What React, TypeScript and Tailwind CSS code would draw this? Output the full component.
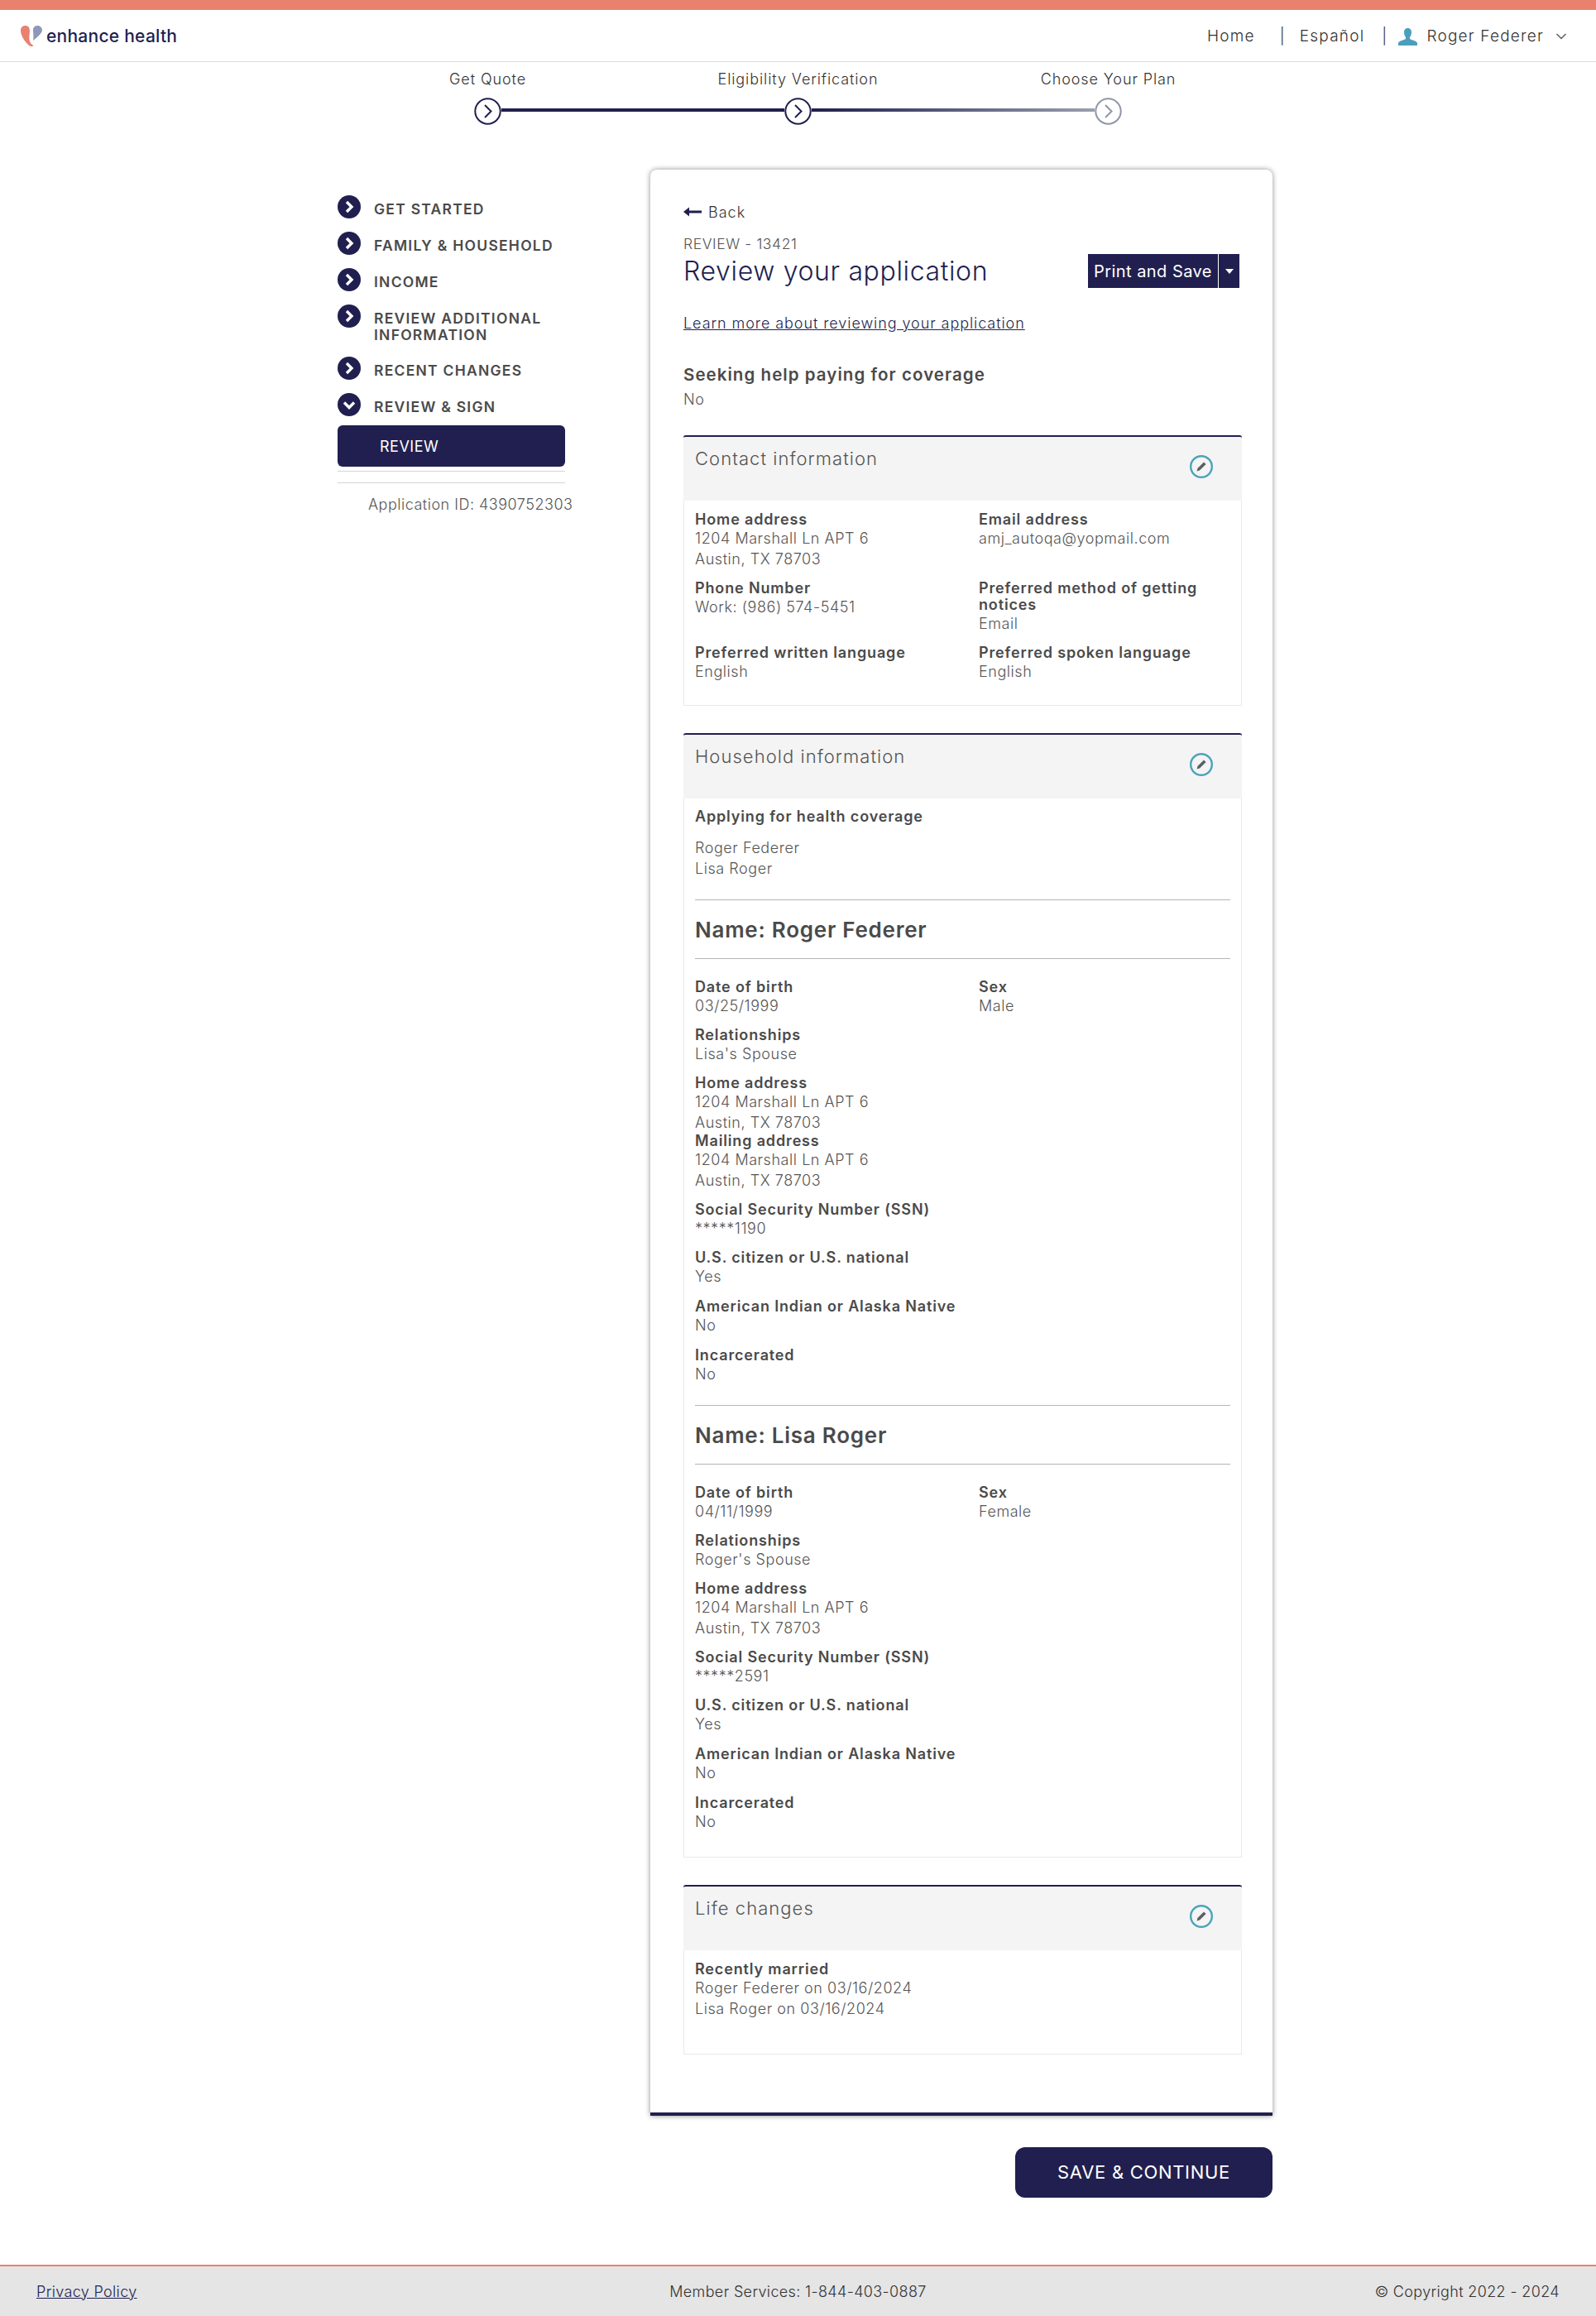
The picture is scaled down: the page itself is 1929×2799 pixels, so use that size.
import { ChevronDown } from 'lucide-react'

const Logo = () => (
    <svg width="27" height="26" viewBox="0 0 27 26" className="shrink-0">
        <path d="M5.5 0C2 0 0 2.5 0 6C0 12 5 20 11 24.5C13 25.5 15 25 15.5 24C11 22 10 17 10.5 12C11 8 11.5 4 9.5 1.5C8.5 .5 7 0 5.5 0Z" fill="#e8826f" />
        <path d="M20 0C16.5 0 14.5 3 15 7C15.5 11 15.5 15 15 18C19 15 26 9 26 5.5C26 2 23 0 20 0Z" fill="#8e98bb" />
    </svg>
)

const UserIcon = () => (
    <svg width="23" height="21" viewBox="0 0 23 21" className="shrink-0">
        <path d="M11.5 0C8.2 0 6.8 2.5 7 5.5C7.2 8 8 9.8 9 11V13C7 14.5 1 15 0 18V21H23V18C22 15 16 14.5 14 13V11C15 9.8 15.8 8 16 5.5C16.2 2.5 14.8 0 11.5 0Z" fill="#4b9fbc" />
    </svg>
)

const StepCircle = ({ muted=false }: { muted?: boolean }) => (
    <svg width="33" height="33" viewBox="0 0 33 33" className="shrink-0">
        <circle cx="16.5" cy="16.5" r="15.2" fill="white" stroke={muted ? '#8e96a8' : '#211f4f'} strokeWidth="2" />
        <path d="M13 9L20.5 16.5L13 24" fill="none" stroke={muted ? '#8e96a8' : '#211f4f'} strokeWidth="2" />
    </svg>
)

const NavIcon = ({ open=false }: { open?: boolean }) => (
    <svg width="28" height="28" viewBox="0 0 28 28" className="shrink-0">
        <circle cx="14" cy="14" r="14" fill="#211f4f" />
        {open
            ? <path d="M8 11.5L14 17.5L20 11.5" fill="none" stroke="white" strokeWidth="3.4" />
            : <path d="M11 8L17 14L11 20" fill="none" stroke="white" strokeWidth="3.4" />}
    </svg>
)

const PencilIcon = () => (
    <svg width="28" height="28" viewBox="0 0 28 28" className="shrink-0">
        <circle cx="14" cy="14" r="12.8" fill="none" stroke="#4ba3bc" strokeWidth="2.4" />
        <path d="M17 8.4L19.6 11L12 18.6L8.6 19.4L9.4 16Z" fill="#5c6068" />
    </svg>
)

const NavItem = ({ children, open=false, className='mb-4' }: { children: React.ReactNode, open?: boolean, className?: string }) => (
    <div className={`flex items-start gap-4 ${className}`}>
        <NavIcon open={open} />
        <div className="pt-[7px] text-[17.5px] leading-[20px] font-semibold uppercase text-[#4a4a4a] tracking-[1.25px] whitespace-nowrap">{children}</div>
    </div>
)

const Field = ({ label, lines, className='mb-[13px]' }: { label: string, lines: string[], className?: string }) => (
    <div className={className}>
        <div className="text-[18px] leading-[20px] font-semibold text-[#4a4a4a] tracking-[0.85px]">{label}</div>
        {lines.map((line) => <div key={line} className="text-[18px] leading-[25px] font-light text-[#555] tracking-[0.55px]">{line}</div>)}
    </div>
)

const Section = ({ title, children, className='' }: { title: string, children: React.ReactNode, className?: string }) => (
    <div className={`border border-[#e9e9e9] border-t-0 ${className}`}>
        <div className="h-[79px] bg-[#f4f4f4] border-t-2 border-[#211f4f] rounded-t-[3px] -mx-px flex justify-between items-start pl-[14px] pr-[35px]">
            <div className="mt-[12px] text-[22px] leading-[28px] font-light text-[#555] tracking-[1.05px]">{title}</div>
            <div className="mt-[22px]"><PencilIcon /></div>
        </div>
        <div className="px-[13px]">{children}</div>
    </div>
)

const Person = ({ name, dob, sex, relation, mailing=false, ssn }: { name: string, dob: string, sex: string, relation: string, mailing?: boolean, ssn: string }) => (
    <div>
        <div className="h-[72px] flex items-center border-y border-[#b5b5b5] text-[26px] font-semibold text-[#4a4a4a] tracking-[0.75px]">Name: {name}</div>
        <div className="pt-[24px]">
            <div className="grid grid-cols-[343px_1fr]">
                <Field label="Date of birth" lines={[dob]} />
                <Field label="Sex" lines={[sex]} />
            </div>
            <Field label="Relationships" lines={[relation]} />
            <Field label="Home address" lines={['1204 Marshall Ln APT 6', 'Austin, TX 78703']} className={mailing ? '' : 'mb-[13px]'} />
            {mailing && <Field label="Mailing address" lines={['1204 Marshall Ln APT 6', 'Austin, TX 78703']} />}
            <Field label="Social Security Number (SSN)" lines={[ssn]} />
            <Field label="U.S. citizen or U.S. national" lines={['Yes']} className="mb-[14px]" />
            <Field label="American Indian or Alaska Native" lines={['No']} className="mb-[14px]" />
            <Field label="Incarcerated" lines={['No']} className="" />
        </div>
    </div>
)

const App = () => {
    return <div className="[font-family:Inter,sans-serif] bg-white min-h-[2799px] flex flex-col">
        <div className="h-[12px] bg-[#e8826f]"></div>
        <header className="h-[63px] border-b border-[#dcdcdc] flex items-center justify-between pl-[25px] pr-[32px] pt-[2px]">
            <div className="flex items-center gap-[4px]">
                <Logo />
                <span className="text-[21px] font-medium text-[#211f4f] tracking-[0.25px]">enhance health</span>
            </div>
            <div className="flex items-center text-[19px] font-light text-[#333] tracking-[1.2px]">
                <span>Home</span>
                <span className="ml-[30px]">|</span>
                <span className="ml-[17px]">Español</span>
                <span className="ml-[21px]">|</span>
                <span className="ml-[13px]"><UserIcon /></span>
                <span className="ml-[11px]">Roger Federer</span>
                <ChevronDown className="ml-[11px] text-[#666]" size={20} />
            </div>
        </header>

        <div className="w-[1125px] mx-auto grid grid-cols-3 text-center text-[18px] leading-[24px] font-light text-[#333] tracking-[0.9px] mt-[9px]">
            <div>Get Quote</div>
            <div>Eligibility Verification</div>
            <div>Choose Your Plan</div>
        </div>
        <div className="w-[783px] mx-auto flex items-center mt-[10px]">
            <StepCircle />
            <div className="flex-1 h-1 mb-[4px] bg-[#211f4f]"></div>
            <StepCircle />
            <div className="flex-1 h-1 mb-[4px] bg-gradient-to-r from-[#211f4f] to-[#9aa0ad]"></div>
            <StepCircle muted />
        </div>

        <main className="flex items-start pl-[408px] mt-[54px]">
            <aside className="w-[275px] pt-[31px]">
                <NavItem>Get Started</NavItem>
                <NavItem>Family &amp; Household</NavItem>
                <NavItem>Income</NavItem>
                <NavItem>Review Additional<br />Information</NavItem>
                <NavItem>Recent Changes</NavItem>
                <NavItem open className="">Review &amp; Sign</NavItem>
                <div className="mt-[11px] h-[50px] bg-[#211f4f] rounded-md flex items-center pl-[51px] text-[18px] font-normal text-white tracking-[0.5px]">REVIEW</div>
                <div className="mt-[5px] h-[15px] border-y border-[#d5d5d5]"></div>
                <div className="mt-[14px] pl-[37px] text-[18px] leading-[24px] font-light text-[#555] whitespace-nowrap tracking-[0.5px]">Application ID: 4390752303</div>
            </aside>

            <div className="flex flex-col items-end ml-[103px]">
                <div className="w-[752px] bg-white rounded-t-lg border-b-4 border-[#211f4f] shadow-[0_0_6px_rgba(0,0,0,0.45)] pl-[40px] pr-[37px] pt-[39px] pb-[70px]">
                    <div className="h-6 flex items-center gap-[8px] text-[18px] font-light text-[#333] tracking-[1px]">
                        <svg width="22" height="12" viewBox="0 0 22 12" className="shrink-0"><path d="M0 6L7 0.5V4.5H22V7.5H7V11.5Z" fill="#211f4f" /></svg>
                        <span>Back</span>
                    </div>
                    <div className="mt-[17px] h-5 text-[17.5px] leading-[20px] font-light text-[#555] tracking-[0.6px]">REVIEW - 13421</div>
                    <div className="mt-[2px] h-[41px] flex items-center justify-between pr-[3px]">
                        <h1 className="text-[32px] font-light text-[#211f4f] tracking-[0.65px]">Review your application</h1>
                        <div className="h-[41px] flex bg-[#211f4f] text-white">
                            <div className="w-[158px] flex items-center justify-center text-[20px] tracking-[0.45px] border-r border-white">Print and Save</div>
                            <div className="w-[25px] flex items-center justify-center">
                                <div className="w-0 h-0 border-x-[5px] border-x-transparent border-t-[6px] border-t-white"></div>
                            </div>
                        </div>
                    </div>
                    <div className="mt-[31px] h-6 text-[18px] leading-[24px] font-light text-[#211f4f] underline tracking-[0.93px]">Learn more about reviewing your application</div>
                    <div className="mt-[38px] h-6 text-[20.5px] leading-[24px] font-semibold text-[#4a4a4a] tracking-[1.05px]">Seeking help paying for coverage</div>
                    <div className="mt-[6px] h-6 text-[18px] leading-[24px] font-light text-[#555] tracking-[0.55px]">No</div>

                    <Section title="Contact information" className="mt-[31px] pb-[15px]">
                        <div className="grid grid-cols-[343px_1fr] pt-[13px]">
                            <Field label="Home address" lines={['1204 Marshall Ln APT 6', 'Austin, TX 78703']} />
                            <Field label="Email address" lines={['amj_autoqa@yopmail.com']} />
                            <Field label="Phone Number" lines={['Work: (986) 574-5451']} />
                            <Field label="Preferred method of getting notices" lines={['Email']} />
                            <Field label="Preferred written language" lines={['English']} />
                            <Field label="Preferred spoken language" lines={['English']} />
                        </div>
                    </Section>

                    <Section title="Household information" className="mt-[33px] pb-[30px]">
                        <div className="pt-[12px] text-[18px] leading-[20px] font-semibold text-[#4a4a4a] tracking-[0.85px]">Applying for health coverage</div>
                        <div className="mt-[15px] mb-[25px] text-[18px] leading-[25px] font-light text-[#555] tracking-[0.55px]">
                            <div>Roger Federer</div>
                            <div>Lisa Roger</div>
                        </div>
                        <Person name="Roger Federer" dob="03/25/1999" sex="Male" relation="Lisa's Spouse" mailing ssn="*****1190" />
                        <div className="h-[25px]"></div>
                        <Person name="Lisa Roger" dob="04/11/1999" sex="Female" relation="Roger's Spouse" ssn="*****2591" />
                    </Section>

                    <Section title="Life changes" className="mt-[33px] pb-[42px]">
                        <div className="pt-[13px]">
                            <Field label="Recently married" lines={['Roger Federer on 03/16/2024', 'Lisa Roger on 03/16/2024']} className="" />
                        </div>
                    </Section>
                </div>
                <button className="mt-[38px] w-[311px] h-[61px] bg-[#211f4f] rounded-xl text-white text-[22px] font-normal tracking-[0.7px]">SAVE &amp; CONTINUE</button>
            </div>
        </main>

        <footer className="mt-auto h-[62px] bg-[#e5e5e5] border-t-2 border-[#e8826f] grid grid-cols-3 items-center px-[44px] text-[18px] font-light text-[#333] tracking-[0.35px]">
            <div><span className="underline text-[#211f4f]">Privacy Policy</span></div>
            <div className="text-center">Member Services: 1-844-403-0887</div>
            <div className="text-right">© Copyright 2022 - 2024</div>
        </footer>
    </div>
}

export default App
